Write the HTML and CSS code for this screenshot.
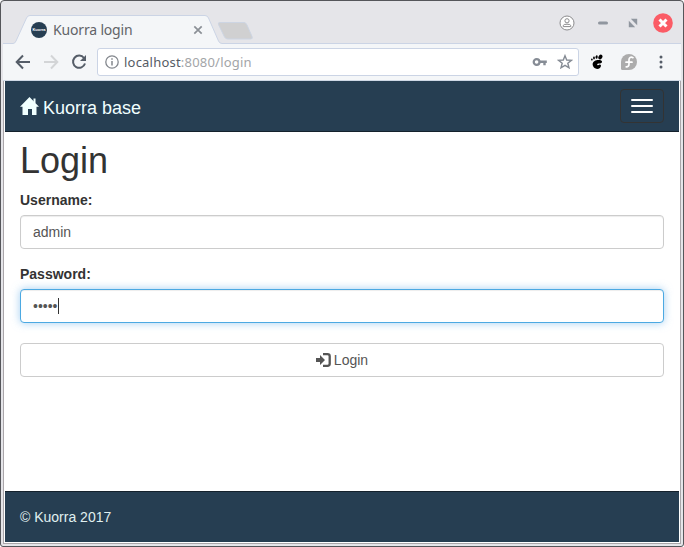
FILE: index.html
```html
<!DOCTYPE html>
<html lang="en">
<head>
<meta charset="utf-8">
<title>Kuorra login</title>
<link rel="stylesheet" href="styles.css">
</head>
<body>
<div class="window">
  <header class="tabstrip">
    <svg class="tab-shape" width="684" height="44" viewBox="0 0 684 44">
      <path d="M3 44V43.5H13Q15 43.500 16 41L26.500 18Q27.500 15.500 30 15.500H205Q207.500 15.500 208.500 18L218.500 41Q219.500 43.500 222 43.500H681V44Z" fill="#f4f6f8"/>
      <path d="M3 43.500H13Q15 43.500 16 41L26.500 18Q27.500 15.500 30 15.500H205Q207.500 15.500 208.500 18L218.500 41Q219.500 43.500 222 43.500H681" fill="none" stroke="#cbd4e5"/>
      <path d="M220 22.500H244Q246 22.500 247 25L252 36.500Q253 39 250.500 39H228Q225.500 39 224.500 37L218.500 24.500Q217.500 22.500 220 22.500Z" fill="#d0d0d1" stroke="#cdd5e3"/>
    </svg>
    <div class="tab">
      <span class="favicon"><span>Kuorra</span></span>
      <span class="tab-title">Kuorra login</span>
      <svg class="tab-close" width="10" height="10" viewBox="0 0 10 10"><path d="M1.300 1.300 8.700 8.700M8.700 1.300 1.300 8.700" stroke="#8b9096" stroke-width="1.700"/></svg>
    </div>
    <div class="controls">
      <svg width="16" height="16" viewBox="0 0 16 16"><g fill="#fff" stroke="#8b8b8d"><circle cx="8" cy="8" r="7"/><circle cx="8" cy="5.800" r="2.100"/><path d="M4.200 11.600V10.500Q4.500 9.200 8 9.200T11.800 10.500V11.600Z"/></g></svg>
      <svg width="10" height="10" viewBox="0 0 10 10"><path d="M1.500 5H8.500" stroke="#90969f" stroke-width="3" stroke-linecap="round"/></svg>
      <svg width="10" height="10" viewBox="0 0 10 10"><path d="M2.800 .8H9.200V7.200ZM.8 2.800V9.200H7.200Z" fill="#90969f"/></svg>
      <svg width="20" height="20" viewBox="0 0 20 20"><circle cx="10" cy="10" r="9.800" fill="#fb5c66"/><path d="M6.500 6.500 13.500 13.500M13.500 6.500 6.500 13.500" stroke="#fff" stroke-width="3"/></svg>
    </div>
  </header>
  <div class="toolbar">
    <svg class="back" width="16" height="16" viewBox="0 0 16 16"><path d="M15 8H2M8 1.500 1.700 8 8 14.500" fill="none" stroke="#555d68" stroke-width="2"/></svg>
    <svg class="forward" width="16" height="16" viewBox="0 0 16 16"><path d="M1 8H14M8 1.500 14.300 8 8 14.500" fill="none" stroke="#d3d5d7" stroke-width="2"/></svg>
    <svg class="reload" width="16" height="16" viewBox="0 0 16 16"><path d="M13 4A6.100 6.100 0 1 0 14 9.500" fill="none" stroke="#555d68" stroke-width="2"/><path d="M15 1V7H9Z" fill="#555d68"/></svg>
    <div class="address">
      <svg class="info" width="14" height="14" viewBox="0 0 14 14"><circle cx="7" cy="7" r="6.200" fill="none" stroke="#83878d" stroke-width="1.300"/><path d="M7 3.200V4.800M7 6V10.600" stroke="#83878d" stroke-width="1.500"/></svg>
      <span class="url"><b>localhost</b>:8080/login</span>
      <svg class="key" width="15" height="10" viewBox="0 0 15 10"><circle cx="4.600" cy="5" r="2.900" fill="none" stroke="#868c95" stroke-width="2.200"/><path d="M8 4.800H14.800M12.500 5V8.300" stroke="#868c95" stroke-width="2.400"/></svg>
      <svg class="star" width="16" height="16" viewBox="0 0 16 16"><path d="M8 1.700 9.700 6 14.400 6.300 10.800 9.200 12 13.800 8 11.300 4 13.800 5.200 9.200 1.600 6.300 6.300 6Z" fill="none" stroke="#868c95" stroke-width="1.400"/></svg>
    </div>
    <svg class="gnome" width="14" height="16" viewBox="0 0 14 16"><g fill="#000"><ellipse cx="10.400" cy="3" rx="1.900" ry="2.600" transform="rotate(25 10.400 3)"/><ellipse cx="6.600" cy="3" rx="1.100" ry="1.700" transform="rotate(10 6.600 3)"/><ellipse cx="4" cy="4" rx=".9" ry="1.400"/><ellipse cx="1.900" cy="5.500" rx=".8" ry="1.100" transform="rotate(-15 1.900 5.500)"/><path d="M7.500 6C12.400 5.300 13 8.200 10.800 9.200 9.400 9.800 7.500 9 7.200 10.200 7 11.400 8.400 11.500 9.200 10.800 10.400 10.100 11.200 11 10.900 12.300 10 15.300 7.200 15.500 5 14.300 1.900 12.400 1 7 7.500 6Z"/></g></svg>
    <svg class="fedora" width="16" height="16" viewBox="0 0 16 16"><path d="M8 0A8 8 0 1 1 8 16H1.500Q0 16 0 14.500V8A8 8 0 0 1 8 0Z" fill="#acacac"/><path d="M12 3.700C9.800 2.500 8 3.600 8 5.800V10Q8 13 5.200 12.800M5 8.200H11" fill="none" stroke="#fff" stroke-width="1.700" stroke-linecap="round"/></svg>
    <svg class="menu" width="4" height="14" viewBox="0 0 4 14"><g fill="#555d68"><circle cx="2" cy="2" r="1.500"/><circle cx="2" cy="7" r="1.500"/><circle cx="2" cy="12" r="1.500"/></g></svg>
  </div>
  <div class="page">
    <nav class="navbar">
      <a class="brand"><svg width="20" height="18" viewBox="0 0 20 18"><path d="M9.500 0 19 9.800H16.500V18H12V12H8V18H2.500V9.800H0Z" fill="#f0ffff"/><path d="M13.500 1.500H15.500V6H13.500Z" fill="#f0ffff"/></svg><span>Kuorra base</span></a>
      <button class="toggle" aria-label="Menu"><i></i><i></i><i></i></button>
    </nav>
    <main>
      <h1>Login</h1>
      <label>Username:</label>
      <div class="field">admin</div>
      <label>Password:</label>
      <div class="field focus"><span>•••••</span><i class="caret"></i></div>
      <button class="submit"><svg width="15" height="14" viewBox="0 0 15 14"><path d="M0 5H4V2L9 7 4 12V9H0Z" fill="#555"/><path d="M7 1.200H11.500Q13.700 1.200 13.700 3.200V10.800Q13.700 12.800 11.500 12.800H7" fill="none" stroke="#555" stroke-width="2.300"/></svg><span>Login</span></button>
    </main>
    <footer>© Kuorra 2017</footer>
  </div>
</div>
</body>
</html>
```
FILE: styles.css
```css
* { box-sizing: border-box; }
body { margin: 0; background: #fff; font: 14px/20px "Liberation Sans", Arial, sans-serif; color: #333; overflow: hidden; }
svg { flex: none; display: block; }
.window { position: relative; width: 684px; height: 547px; display: flex; flex-direction: column; background: #e5e5e9; border: 1px solid #55565a; border-radius: 4px 4px 3px 3px; overflow: hidden; }
.tabstrip { position: relative; height: 43px; flex: none; display: flex; justify-content: space-between; font-family: "Noto Sans", sans-serif; }
.tab-shape { position: absolute; left: -1px; top: -1px; }
.tab { position: relative; display: flex; align-items: center; width: 203px; height: 28px; margin: 15px 0 0 30px; }
.favicon { width: 16px; height: 16px; flex: none; border-radius: 50%; background: #263e52; display: flex; align-items: center; justify-content: center; color: #fff; font: bold 4px/4px "Liberation Sans", sans-serif; overflow: hidden; }
.tab-title { width: 81px; margin-left: 6px; font-size: 14px; color: #626468; white-space: nowrap; letter-spacing: -.17px; }
.tab-close { margin-left: 59px; }
.controls { position: relative; display: flex; align-items: center; height: 43px; margin-right: 10px; }
.controls svg:nth-child(2) { margin-left: 23px; }
.controls svg:nth-child(3) { margin-left: 20px; }
.controls svg:nth-child(4) { margin-left: 15px; }
.toolbar { height: 37px; flex: none; display: flex; align-items: center; margin: 0 2px; padding: 0 0 0 12px; background: #f4f6f8; border-bottom: 1px solid #cfd8e5; }
.forward { margin-left: 12px; }
.reload { margin-left: 12px; }
.address { width: 482px; height: 28px; margin-left: 10px; padding: 0 5px 0 7px; display: flex; align-items: center; background: #fff; border: 1px solid #cbd4e5; border-radius: 3px; font-family: "Noto Sans", sans-serif; }
.url { margin-left: 5px; flex: 1; font-size: 13px; color: #a3a5a8; white-space: nowrap; letter-spacing: .21px; }
.url b { font-weight: 400; color: #555b65; }
.star { margin-left: 10px; }
.gnome { margin-left: 11px; }
.fedora { margin-left: 17px; }
.menu { margin-left: 22px; }
.page { flex: 1; display: flex; flex-direction: column; margin: 0 2px 2px; background: #fff; border: 1px solid #aaa6aa; border-top: 0; }
.navbar { height: 51px; flex: none; display: flex; justify-content: space-between; align-items: center; background: #263e52; border-bottom: 1px solid #14212c; margin: 0 1px; padding: 0 15px; }
.brand { display: flex; align-items: center; gap: 3px; color: #f0ffff; font-size: 18px; }
.brand span { padding-top: 3px; }
.toggle { width: 44px; height: 34px; padding: 0 10px; display: flex; flex-direction: column; justify-content: center; gap: 4px; background: none; border: 1px solid #333; border-radius: 4px; }
.toggle i { width: 22px; height: 2px; border-radius: 1px; background: #fff; }
main { flex: 1; padding: 9px 16px 0; }
h1 { margin: 0 0 9px; font-size: 36px; line-height: 40px; font-weight: 500; }
label { display: block; font-weight: 700; margin-bottom: 5px; }
.field { display: flex; align-items: center; height: 34px; margin-bottom: 15px; padding: 0 12px; border: 1px solid #ccc; border-radius: 4px; color: #555; background: #fff; box-shadow: inset 0 1px 1px rgba(0,0,0,.075); }
.field.focus { border-color: #4ca9e2; box-shadow: inset 0 1px 1px rgba(0,0,0,.075), 0 0 8px rgba(102,175,233,.6); margin-bottom: 20px; }
.caret { width: 1px; height: 16px; background: #333; }
.submit { display: flex; justify-content: center; align-items: center; gap: 3px; width: 100%; height: 34px; padding: 0; background: #fff; border: 1px solid #ccc; border-radius: 4px; color: #555; font: 14px/20px "Liberation Sans", Arial, sans-serif; }
footer { height: 51px; flex: none; margin: 0 1px 1px; padding: 15px 15px; border-top: 1px solid #14212c; background: #263e52; color: #e0f0f0; line-height: 20px; }
```
